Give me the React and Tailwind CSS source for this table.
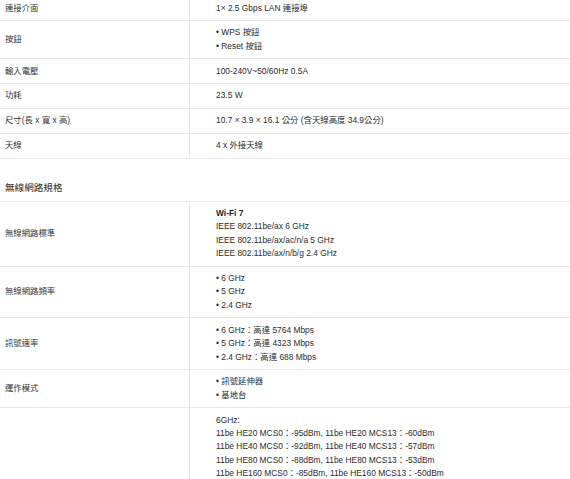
import React from "react";

const basicSpecs = [
  { label: "連接介面", lines: ["1× 2.5 Gbps LAN 連接埠"] },
  { label: "按鈕", lines: ["• WPS 按鈕", "• Reset 按鈕"] },
  { label: "輸入電壓", lines: ["100-240V~50/60Hz 0.5A"] },
  { label: "功耗", lines: ["23.5 W"] },
  { label: "尺寸(長 x 寬 x 高)", lines: ["10.7 × 3.9 × 16.1 公分 (含天線高度 34.9公分)"] },
  { label: "天線", lines: ["4 x 外接天線"] },
];

const wirelessSpecs = [
  {
    label: "無線網路標準",
    title: "Wi-Fi 7",
    lines: [
      "IEEE 802.11be/ax 6 GHz",
      "IEEE 802.11be/ax/ac/n/a 5 GHz",
      "IEEE 802.11be/ax/n/b/g 2.4 GHz",
    ],
  },
  { label: "無線網路頻率", lines: ["• 6 GHz", "• 5 GHz", "• 2.4 GHz"] },
  {
    label: "訊號速率",
    lines: ["• 6 GHz：高達 5764 Mbps", "• 5 GHz：高達 4323 Mbps", "• 2.4 GHz：高達 688 Mbps"],
  },
  { label: "運作模式", lines: ["• 訊號延伸器", "• 基地台"] },
  {
    label: "",
    lines: [
      "6GHz:",
      "11be HE20 MCS0：-95dBm, 11be HE20 MCS13：-60dBm",
      "11be HE40 MCS0：-92dBm, 11be HE40 MCS13：-57dBm",
      "11be HE80 MCS0：-88dBm, 11be HE80 MCS13：-53dBm",
      "11be HE160 MCS0：-85dBm, 11be HE160 MCS13：-50dBm",
    ],
  },
];

function Line({ children, className = "" }) {
  return (
    <div className={`h-[13.44px] flex items-center whitespace-nowrap ${className}`}>
      {children}
    </div>
  );
}

function SpecRow({ row }) {
  return (
    <div className="grid grid-cols-[190px_1fr] border-b border-[#e6e6e6]">
      <div className="flex items-center border-r border-[#e6e6e6] pl-[5px] py-[5.2px] text-[#333]">
        <Line>{row.label}</Line>
      </div>
      <div className="pl-[26px] py-[5.2px] text-[#2b2b2b]">
        {row.title && <Line className="font-bold text-[#1f1f1f]">{row.title}</Line>}
        {row.lines.map((line) => (
          <Line key={line}>{line}</Line>
        ))}
      </div>
    </div>
  );
}

export default function App() {
  return (
    <div
      className="w-[570px] h-[479px] overflow-hidden bg-white text-[8.4px] leading-[13.44px]"
      style={{ fontFamily: '"Liberation Sans", Arial, "Noto Sans CJK TC", sans-serif' }}
    >
      <div className="-mt-[3.6px]">
        <div>
          {basicSpecs.map((row) => (
            <SpecRow key={row.label} row={row} />
          ))}
        </div>

        <div className="pl-[5px] pt-[22px] pb-[6.5px] text-[9.6px] text-[#2b2b2b]">
          <Line>無線網路規格</Line>
        </div>

        <div className="border-t border-[#e6e6e6]">
          {wirelessSpecs.map((row, i) => (
            <SpecRow key={i} row={row} />
          ))}
        </div>
      </div>
    </div>
  );
}
